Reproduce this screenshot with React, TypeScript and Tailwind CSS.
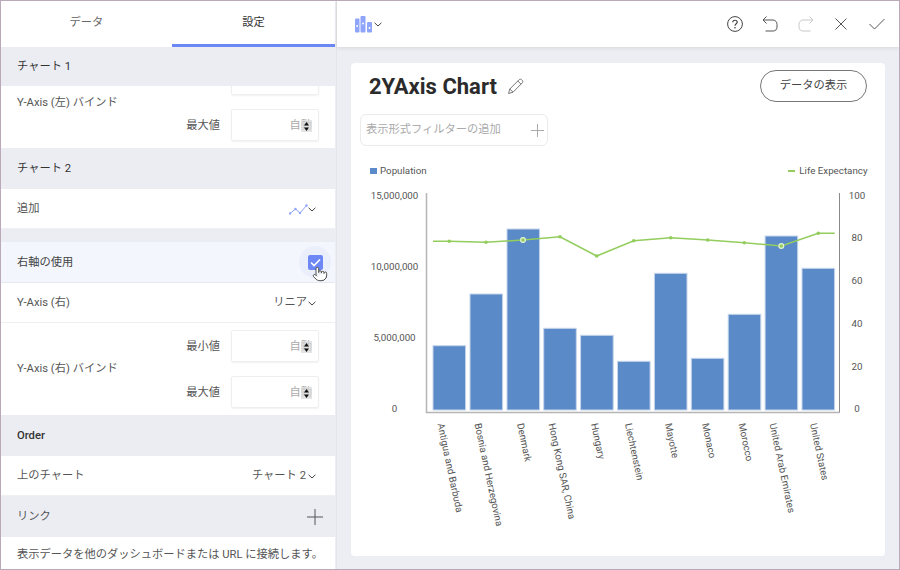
import React from "react";
import { Pointer } from "lucide-react";

const Chevron = () => (
  <svg width="8" height="5" viewBox="0 0 8 5" className="ml-[1px] shrink-0">
    <path d="M0.6 0.8 L4 4 L7.4 0.8" fill="none" stroke="#444" strokeWidth="1" />
  </svg>
);

const Section = ({ children, dark = false, tall = true }: { children: React.ReactNode; dark?: boolean; tall?: boolean }) => (
  <div className={`flex shrink-0 items-center bg-[#ecedf3] px-4 pt-[2px] text-[11.25px] ${tall ? "h-[41px]" : "h-[39px]"} ${dark ? "font-medium text-[#333]" : "text-[#333]"}`}>
    {children}
  </div>
);

const Row = ({ label, children }: { label: string; children?: React.ReactNode }) => (
  <div className="flex h-[40px] shrink-0 items-center justify-between border-b border-[#f0f0f3] bg-white pl-4 pr-[19px] pt-[2px] text-[11.25px] text-[#555]">
    <span>{label}</span>
    <div className="flex items-center">{children}</div>
  </div>
);

const NumberField = ({ label }: { label: string }) => (
  <div className="flex items-center justify-end gap-[11px]">
    <span className="pt-[2px] text-[11.25px] text-[#555]">{label}</span>
    <div className="relative flex h-[32px] w-[88px] items-center justify-end rounded-[2px] border border-[#efefef] pr-[6px] pt-[2px] text-[11.25px] text-[#aaa] shadow-[0_1px_2px_rgba(0,0,0,0.06)]">
      自動
      <div className="absolute right-[6px] top-[10px] flex h-[12px] w-[11px] items-center justify-center bg-[#d9d9d9]/70">
        <svg width="5" height="9" viewBox="0 0 5 9">
          <path d="M2.5 0 L5 3.4 H0 Z M2.5 9 L5 5.6 H0 Z" fill="#111" />
        </svg>
      </div>
    </div>
  </div>
);

const Bind = ({ label, scrolled = false }: { label: string; scrolled?: boolean }) => (
  <div className="relative flex h-[92px] shrink-0 flex-col justify-center gap-[14px] bg-white px-4">
    {scrolled ? (
      <div className="h-[32px] w-[88px] self-end rounded-[2px] border border-[#efefef] shadow-[0_1px_2px_rgba(0,0,0,0.06)]" />
    ) : (
      <NumberField label="最小値" />
    )}
    <NumberField label="最大値" />
    <span className={`absolute left-4 text-[11.25px] text-[#555] ${scrolled ? "top-[39px]" : "top-[38px]"}`}>{label}</span>
  </div>
);

const bars = [
  [433, 345.7],
  [470, 294],
  [507, 229],
  [543.7, 328.3],
  [580.6, 335.3],
  [617.5, 361.3],
  [654.4, 273.3],
  [691.3, 358.3],
  [728.2, 314.3],
  [765.1, 236],
  [802, 268.3],
];

const line: [number, number][] = [
  [449.3, 241.3],
  [486, 242.3],
  [523, 240],
  [560, 236.7],
  [596.7, 256],
  [633.7, 240.7],
  [670.7, 237.7],
  [707.7, 240],
  [744.3, 242.7],
  [781.3, 246],
  [818.3, 233.3],
];

const cats: [string, number][] = [
  ["Antigua and Barbuda", 437.5],
  ["Bosnia and Herzegovina", 474.5],
  ["Denmark", 517],
  ["Hong Kong SAR, China", 548.5],
  ["Hungary", 591],
  ["Liechtenstein", 625],
  ["Mayotte", 665],
  ["Monaco", 702],
  ["Morocco", 738.5],
  ["United Arab Emirates", 769.5],
  ["United States", 810],
];

const Chart = () => (
  <svg width="534" height="376" viewBox="351 180 534 376" className="mt-[3px] block">
    <g fontFamily="Roboto, sans-serif" fontSize="9.75" fill="#555" textAnchor="middle">
      <text x="394.5" y="199">15,000,000</text>
      <text x="394.5" y="270">10,000,000</text>
      <text x="394.5" y="341">5,000,000</text>
      <text x="394.5" y="412">0</text>
      <text x="857" y="199">100</text>
      <text x="857" y="241">80</text>
      <text x="857" y="284">60</text>
      <text x="857" y="327">40</text>
      <text x="857" y="369.5">20</text>
      <text x="857" y="412">0</text>
    </g>
    {bars.map(([x, y]) => (
      <rect key={x} x={x} y={y} width={32.6} height={410 - y} fill="#5a8ac8" stroke="#c6d6ec" strokeWidth="1" />
    ))}
    <path d="M426.5 193 V412.5 H839.5" fill="none" stroke="#b5b5b5" strokeWidth="1.5" />
    <path d="M839.5 193 V412.5" fill="none" stroke="#8a8a8a" strokeWidth="1" />
    <polyline
      points={`433,241.3 ${line.map((p) => p.join(",")).join(" ")} 834.7,233.3`}
      fill="none"
      stroke="#93cd5d"
      strokeWidth="1.6"
    />
    {line.map(([x, y], i) =>
      i === 2 || i === 9 ? (
        <circle key={x} cx={x} cy={y} r="2.4" fill="#93cd5d" stroke="#e4f2d6" strokeWidth="1.2" />
      ) : (
        <circle key={x} cx={x} cy={y} r="1.8" fill="#93cd5d" />
      )
    )}
    <g fontFamily="Roboto, sans-serif" fontSize="9.75" fill="#555">
      {cats.map(([t, x]) => (
        <text key={t} x={x} y="424" transform={`rotate(78 ${x} 424)`}>
          {t}
        </text>
      ))}
    </g>
  </svg>
);

export default function App() {
  return (
    <div className="flex h-[570px] w-[900px] overflow-hidden border border-[#b9a9b9] bg-[#eceef3] font-['Roboto','Noto_Sans_CJK_JP',sans-serif]">
      <aside className="flex h-full w-[334px] shrink-0 flex-col overflow-hidden">
        <div className="flex h-[46px] shrink-0 bg-white text-[11.25px] shadow-[0_1px_3px_rgba(0,0,0,0.1)]">
          <div className="flex w-[171px] items-center justify-center pb-[1px] text-[#666]">データ</div>
          <div className="flex flex-1 items-center justify-center border-b-[3px] border-[#6b87f3] pt-[2px] text-[#333]">設定</div>
        </div>
        <Section tall={false}>チャート 1</Section>
        <div className="flex h-[62px] shrink-0 flex-col justify-end overflow-hidden bg-white">
          <Bind label="Y-Axis (左) バインド" scrolled />
        </div>
        <Section>チャート 2</Section>
        <Row label="追加">
          <svg width="19" height="11" viewBox="0 0 19 11">
            <path d="M1 9.5 L6.5 5 L11 9 L17.5 1.5" fill="none" stroke="#8fa4fb" strokeWidth="1" />
            <g fill="#8fa4fb">
              <circle cx="1" cy="9.5" r="1.2" />
              <circle cx="6.5" cy="5" r="1.2" />
              <circle cx="11" cy="9" r="1.2" />
              <circle cx="17.5" cy="1.5" r="1.2" />
            </g>
          </svg>
          <span className="-ml-[1px] flex"><Chevron /></span>
        </Row>
        <div className="h-[13px] shrink-0 bg-[#ecedf3]" />
        <div className="relative flex h-[41px] shrink-0 items-center justify-between border-b border-[#e6e9f2] bg-[#f3f6fd] pl-4 pr-[4px] text-[11.25px] text-[#444]">
          <span className="pt-[2px]">右軸の使用</span>
          <div className="flex h-[32px] w-[32px] items-center justify-center rounded-full bg-[#ebeefb]">
            <div className="flex h-[15px] w-[15px] items-center justify-center rounded-[2px] bg-[#6d87f5]">
              <svg width="11" height="9" viewBox="0 0 11 9">
                <path d="M1 4.5 L4 7.5 L10 1.5" fill="none" stroke="#fff" strokeWidth="1.6" />
              </svg>
            </div>
          </div>
          <Pointer size={16} strokeWidth={1.4} fill="#fff" color="#444" className="absolute left-[311px] top-[24px]" />
        </div>
        <Row label="Y-Axis (右)">
          リニア
          <Chevron />
        </Row>
        <Bind label="Y-Axis (右) バインド" />
        <Section dark>Order</Section>
        <Row label="上のチャート">
          チャート 2
          <span className="ml-[1px] flex"><Chevron /></span>
        </Row>
        <div className="flex h-[41px] shrink-0 items-center justify-between bg-[#ecedf3] pl-4 pr-[12px] text-[11.25px] text-[#555]">
          <span className="pt-[2px]">リンク</span>
          <svg width="16" height="16" viewBox="0 0 16 16">
            <path d="M8 0 V16 M0 8 H16" stroke="#555" strokeWidth="1" />
          </svg>
        </div>
        <div className="flex flex-1 items-center whitespace-nowrap bg-white px-4 pt-[4px] text-[11.25px] text-[#555]">
          表示データを他のダッシュボードまたは URL に接続します。
        </div>
      </aside>

      <main className="ml-[1px] flex min-w-0 flex-1 flex-col border-l border-[#e4e4e8]">
        <header className="flex h-[46px] shrink-0 items-center justify-between bg-white pl-[18px] pr-[14px] shadow-[0_1px_4px_rgba(0,0,0,0.1)]">
          <div className="flex items-center">
            <svg width="18" height="18" viewBox="0 0 18 18">
              <g fill="#8fa4fb">
                <rect x="0" y="3.5" width="4.5" height="14" rx="1" />
                <rect x="5.5" y="1" width="5" height="16.5" rx="1" />
                <rect x="12" y="7" width="5" height="10.5" rx="1" />
              </g>
              <g fill="#fff">
                <circle cx="2.2" cy="11" r="1" />
                <circle cx="8" cy="8.5" r="1" />
                <circle cx="14.5" cy="13" r="1" />
              </g>
            </svg>
            <Chevron />
          </div>
          <div className="flex items-center">
            <svg width="16" height="16" viewBox="0 0 16 16">
              <circle cx="8" cy="8" r="7.4" fill="none" stroke="#444" strokeWidth="1" />
              <path d="M5.8 6.2 C5.8 3.6 10.2 3.6 10.2 6.2 C10.2 7.8 8 7.8 8 9.8" fill="none" stroke="#444" strokeWidth="1.2" />
              <circle cx="8" cy="11.8" r="0.8" fill="#444" />
            </svg>
            <svg width="16" height="16" viewBox="0 0 16 16" className="ml-[19px]">
              <path d="M4.5 0.5 L1 4 L4.5 7.5 M1 4 H11 C13.5 4 15 6 15 8.5 V11 C15 13.5 13.5 15 11 15 H3.5" fill="none" stroke="#555" strokeWidth="1" />
            </svg>
            <svg width="16" height="16" viewBox="0 0 16 16" className="ml-[20px]">
              <path d="M11.5 0.5 L15 4 L11.5 7.5 M15 4 H5 C2.5 4 1 6 1 8.5 V11 C1 13.5 2.5 15 5 15 H12.5" fill="none" stroke="#c8c8c8" strokeWidth="1" />
            </svg>
            <svg width="16" height="16" viewBox="0 0 16 16" className="ml-[19px]">
              <path d="M2.5 2.5 L13.5 13.5 M13.5 2.5 L2.5 13.5" stroke="#555" strokeWidth="1" />
            </svg>
            <svg width="16" height="16" viewBox="0 0 16 16" className="ml-[20px]">
              <path d="M0.5 8 L5.5 13 L15.5 3" fill="none" stroke="#555" strokeWidth="1" />
            </svg>
          </div>
        </header>

        <div className="mx-[14px] mt-[16px] flex h-[493px] w-[534px] flex-col rounded-[4px] bg-white pt-[7px]">
          <div className="flex h-[32px] items-center justify-between pl-[18px] pr-[18px]">
            <div className="mt-[1px] flex items-center">
              <h1 className="text-[22px] font-bold leading-none text-[#2b2b2b]">2YAxis Chart</h1>
              <svg width="17" height="17" viewBox="0 0 17 17" className="ml-[10px]">
                <path d="M1.5 15.5 L2.8 11 L12 1.8 C12.8 1 14 1 14.8 1.8 L15.2 2.2 C16 3 16 4.2 15.2 5 L6 14.2 Z M10.8 3 L14 6.2 M2.8 11 L6 14.2" fill="none" stroke="#777" strokeWidth="1" />
              </svg>
            </div>
            <button className="flex h-[32px] w-[107px] items-center justify-center rounded-full border border-[#777] text-[11.25px] text-[#444]">
              データの表示
            </button>
          </div>
          <div className="ml-[9px] mt-[12px] flex h-[32px] w-[188px] items-center justify-between rounded-[6px] border border-[#ebebeb] pl-[5px] pr-[3px] text-[11.25px] text-[#aaa]">
            表示形式フィルターの追加
            <svg width="13" height="13" viewBox="0 0 13 13">
              <path d="M6.5 0 V13 M0 6.5 H13" stroke="#aaa" strokeWidth="1" />
            </svg>
          </div>
          <div className="mt-[19px] flex h-[12px] items-center justify-between pl-[19px] pr-[17.5px] text-[9.75px] text-[#555]">
            <div className="flex items-center gap-[3px]">
              <span className="h-[6px] w-[7px] bg-[#5a8ac8]" />
              Population
            </div>
            <div className="flex items-center gap-[4px]">
              <span className="h-[2px] w-[7px] bg-[#93cd5d]" />
              Life Expectancy
            </div>
          </div>
          <Chart />
        </div>
      </main>
    </div>
  );
}
